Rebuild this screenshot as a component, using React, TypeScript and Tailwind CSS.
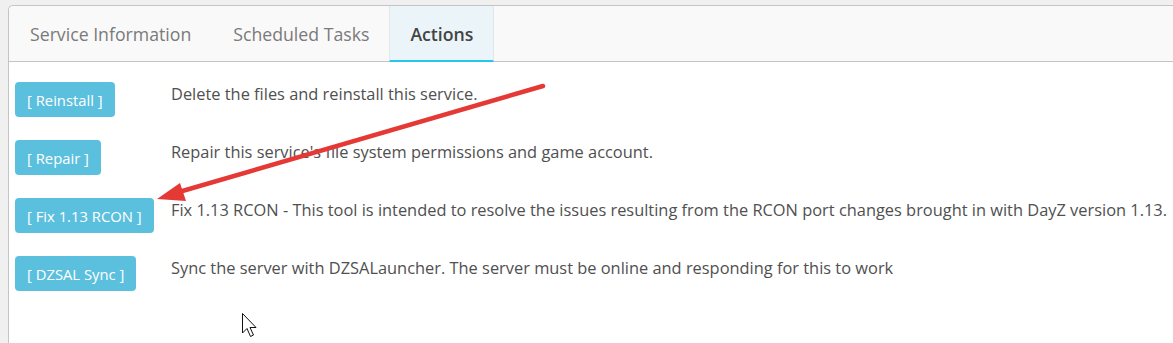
import React from "react";

const rows = [
  { label: "[ Reinstall ]", desc: "Delete the files and reinstall this service." },
  { label: "[ Repair ]", desc: "Repair this service's file system permissions and game account." },
  {
    label: "[ Fix 1.13 RCON ]",
    desc: "Fix 1.13 RCON - This tool is intended to resolve the issues resulting from the RCON port changes brought in with DayZ version 1.13.",
  },
  { label: "[ DZSAL Sync ]", desc: "Sync the server with DZSALauncher. The server must be online and responding for this to work" },
];

export default function App() {
  return (
    <div
      className="relative w-[1173px] h-[343px] overflow-hidden bg-[#f0f0f0] pt-[5px] pl-[8px]"
      style={{ fontFamily: '"Open Sans", sans-serif' }}
    >
      <div className="h-[400px] w-[1200px] rounded-tl-[5px] border-l border-t border-[#c4c4c4] bg-white">
        <div className="flex h-[56px] border-b border-[#c4c4c4] bg-[#f9f9f9] rounded-tl-[5px]">
          <div className="flex items-center pt-[2px] pl-[21px] pr-[22px] text-[17.7px] text-[#7a7a7a]">Service Information</div>
          <div className="flex items-center pt-[2px] px-[20px] text-[17.7px] text-[#7a7a7a]">Scheduled Tasks</div>
          <div className="flex items-center pt-[2px] px-[20px] text-[17.7px] font-semibold text-[#444] bg-[#ebf5f9] border-x border-[#e2e8ea] border-b-2 border-b-[#27c6ec] -mb-px">
            Actions
          </div>
        </div>
        <div className="flex flex-col gap-[23px] pl-[6px] pt-[20px]">
          {rows.map((r) => (
            <div key={r.label} className="flex items-start">
              <div className="w-[156px] shrink-0">
                <button className="h-[35px] rounded-[4px] bg-[#5bc0de] px-[12px] pt-[1px] text-[14.8px] text-white">
                  {r.label}
                </button>
              </div>
              <div className="mt-[1px] text-[16.4px] leading-[22px] text-[#505050] whitespace-nowrap">{r.desc}</div>
            </div>
          ))}
        </div>
      </div>
      <svg className="absolute left-0 top-0" width="1173" height="343" viewBox="0 0 1173 343">
        <line x1="543" y1="86" x2="172" y2="194" stroke="#e53935" strokeWidth="4.5" strokeLinecap="round" />
        <polygon points="157,199 180,183 186,201" fill="#e53935" />
        <path
          d="M242.5 313.5 L242.5 333 L247 328.5 L250.5 336.5 L253.5 335 L250 327.5 L256 327.5 Z"
          fill="white"
          stroke="#111"
          strokeWidth="1"
          strokeLinejoin="round"
        />
      </svg>
    </div>
  );
}
